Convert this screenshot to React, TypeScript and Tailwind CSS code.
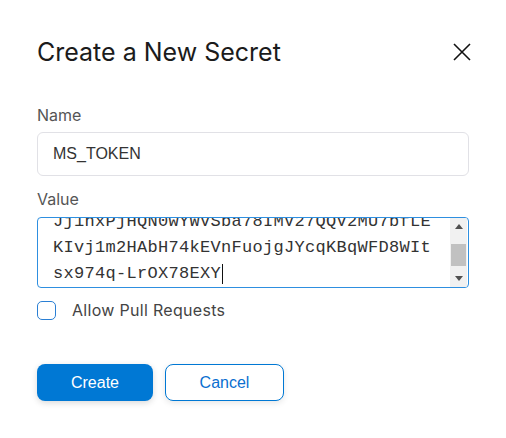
import React from 'react'

const secretLines = [
  'Jj1hxPjHQN0wYWVSba78IMV27QQV2MU7bfLE',
  'KIvj1m2HAbH74kEVnFuojgJYcqKBqWFD8WIt',
  'sx974q-LrOX78EXY',
]

function CloseIcon() {
  return (
    <svg width="18" height="18" viewBox="0 0 18 18" fill="none" stroke="#111" strokeWidth="1.6">
      <path d="M1 1L17 17M17 1L1 17" />
    </svg>
  )
}

export default function App() {
  return (
    <div className="w-[506px] h-[438px] bg-white px-[37px] pt-[36px] text-[#222]" style={{ fontFamily: 'Inter, "Noto Sans", sans-serif' }}>
      {/* Header */}
      <div className="flex items-center justify-between h-[32px]">
        <h2 className="text-[25px] leading-[32px] font-normal text-[#1b1b1b]">Create a New Secret</h2>
        <button className="mr-[-2px] p-0">
          <CloseIcon />
        </button>
      </div>

      {/* Name */}
      <label className="block mt-[37px] text-[16px] leading-[20px] text-[#555]">Name</label>
      <div className="mt-[7px] h-[44px] rounded-[6px] border border-[#e1e1e6] flex items-center px-[15px]">
        <span className="text-[16px] text-[#333]" style={{ fontFamily: '"Liberation Sans", Arial, sans-serif' }}>MS_TOKEN</span>
      </div>

      {/* Value */}
      <label className="block mt-[13px] text-[16px] leading-[20px] text-[#555]">Value</label>
      <div className="mt-[8px] h-[71px] rounded-[4px] border border-[#2e8fe0] flex overflow-hidden">
        <div className="flex-1 overflow-hidden pl-[15px]">
          <div
            className="mt-[-9px] text-[17px] leading-[26px] text-[#333] tracking-[0.3px]"
            style={{ fontFamily: '"Liberation Mono", "DejaVu Sans Mono", monospace' }}
          >
            {secretLines.map((line, i) => (
              <div key={i} className="whitespace-nowrap">
                {line}
                {i === secretLines.length - 1 && (
                  <span className="inline-block align-middle w-px h-[20px] bg-[#111] ml-[1px]" />
                )}
              </div>
            ))}
          </div>
        </div>
        {/* Scrollbar */}
        <div className="w-[17px] bg-[#f1f1f1] flex flex-col items-center mr-[1px]">
          <div className="h-[17px] flex items-center justify-center">
            <svg width="8" height="5" viewBox="0 0 8 5"><path d="M0 5L4 0L8 5Z" fill="#505050" /></svg>
          </div>
          <div className="w-[15px] h-[22px] bg-[#c1c1c1] mt-[9px]" />
          <div className="flex-1" />
          <div className="h-[17px] flex items-center justify-center">
            <svg width="8" height="5" viewBox="0 0 8 5"><path d="M0 0L8 0L4 5Z" fill="#505050" /></svg>
          </div>
        </div>
      </div>

      {/* Checkbox */}
      <div className="mt-[12px] flex items-center">
        <div className="w-[19px] h-[19px] rounded-[5px] border-[1.5px] border-[#2a7fd4] bg-white" />
        <span className="ml-[16px] text-[16px] leading-[20px] text-[#444] tracking-[0.3px]">Allow Pull Requests</span>
      </div>

      {/* Buttons */}
      <div className="mt-[44px] flex gap-[12px]" style={{ fontFamily: '"Liberation Sans", Arial, sans-serif' }}>
        <button className="w-[116px] h-[37px] rounded-[8px] bg-[#0078d4] text-white text-[16px] shadow-[0_2px_6px_rgba(0,0,0,0.15)]">
          Create
        </button>
        <button className="w-[119px] h-[37px] rounded-[8px] border border-[#0078d4] bg-white text-[#0a6fd0] text-[16px] shadow-[0_2px_6px_rgba(0,0,0,0.1)]">
          Cancel
        </button>
      </div>
    </div>
  )
}
